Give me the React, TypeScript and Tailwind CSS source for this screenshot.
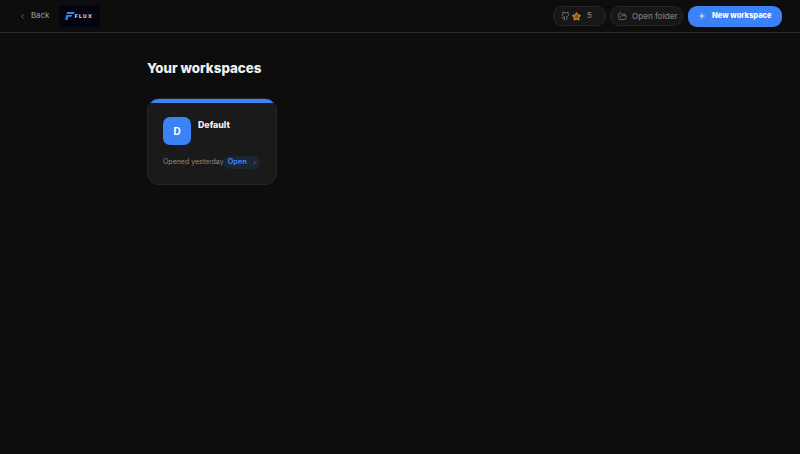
import { ChevronLeft, ChevronRight, Star, FolderOpen, Plus } from "lucide-react";

function GithubMark() {
  return (
    <svg viewBox="0 0 24 24" className="w-[9px] h-[10px] shrink-0 text-[#777777]" fill="none" stroke="currentColor" strokeWidth={2.400} strokeLinecap="round" strokeLinejoin="round">
      <path d="M15 22v-4a4.800 4.800 0 0 0-1-3.500c3 0 6-2 6-5.500.080-1.250-.270-2.480-1-3.500.280-1.150.280-2.350 0-3.500 0 0-1 0-3 1.500-2.640-.500-5.360-.500-8 0C6 2 5 2 5 2c-.300 1.150-.300 2.350 0 3.500A5.400 5.400 0 0 0 4 9c0 3.500 3 5.500 6 5.500-.390.490-.680 1.050-.850 1.650-.170.600-.220 1.230-.150 1.850v4" />
      <path d="M9 18c-4.510 2-5-2-7-2" />
    </svg>
  );
}

export default function App() {
  return (
    <div className="min-h-[454px] bg-[#0d0d0d] text-white font-['Inter',sans-serif] overflow-hidden">
      <header className="h-[33px] border-b border-[#2a2a2a] flex items-center justify-between pl-[19px] pr-[18px]">
        <div className="flex items-center">
          <div className="flex items-center gap-[5px] text-[#8f8f8f] text-[7.800px] font-medium">
            <ChevronLeft className="w-[7px] h-[7px]" strokeWidth={2.500} />
            <span>Back</span>
          </div>
          <div className="ml-[10px] w-[41px] h-[21px] bg-[#02040f] rounded-[2px] flex items-center pl-[6px]">
            <svg viewBox="0 0 12 10" className="w-[10px] h-[8px] shrink-0">
              <path d="M2.500 0H12L10.800 2.600H1.400Z M1.200 3.600H8.800L7.800 6H3.900L2.800 10H0Z" fill="#1f8fff" />
            </svg>
            <span className="-ml-[1px] text-[5px] leading-none font-bold tracking-[1px] text-[#cfd6e0] font-['DejaVu_Sans',sans-serif]">FLUX</span>
          </div>
        </div>
        <div className="flex items-center">
          <div className="h-[20px] w-[53px] rounded-[9px] border border-[#262626] bg-[#171717] flex items-center pl-[7px] text-[#8a8a8a]">
            <GithubMark />
            <Star className="w-[9px] h-[9px] ml-[2px] text-[#d8941f] fill-[#7a5412]" strokeWidth={2.800} />
            <span className="ml-[6px] text-[7.500px] font-medium">5</span>
          </div>
          <div className="ml-[4px] h-[20px] w-[73px] rounded-[9px] border border-[#262626] bg-[#171717] flex items-center pl-[7px] gap-[5px] text-[#7d7d7d]">
            <FolderOpen className="w-[9px] h-[9px]" />
            <span className="text-[8.100px] font-medium">Open folder</span>
          </div>
          <div className="ml-[5px] h-[21px] w-[94px] rounded-[9px] bg-[#3b82f6] flex items-center pl-[10px] gap-[6px]">
            <Plus className="w-[8px] h-[8px] text-[#eaf1ff]" strokeWidth={2.500} />
            <span className="text-[7.500px] font-extrabold text-white">New workspace</span>
          </div>
        </div>
      </header>
      <main className="pl-[147px] pt-[25px]">
        <h1 className="text-[13.300px] leading-[20px] font-extrabold text-[#f0f0f0]">Your workspaces</h1>
        <div className="mt-[20px] w-[130px] h-[87px] rounded-[12px] bg-[#1a1a1a] border border-[#262626] overflow-hidden">
          <div className="h-[4px] bg-[#3b82f6]" />
          <div className="pt-[14px] px-[15px]">
            <div className="flex items-start">
              <div className="w-[28px] h-[28px] rounded-[7px] bg-[#3b82f6] flex items-center justify-center text-[10px] font-bold text-white">D</div>
              <span className="ml-[7px] mt-[1px] text-[8.800px] leading-[13px] font-extrabold text-[#f0f0f0]">Default</span>
            </div>
            <div className="mt-[11px] flex items-center">
              <span className="text-[7px] text-[#8a8a8a] whitespace-nowrap">Opened yesterday</span>
              <div className="h-[13px] w-[37px] shrink-0 -ml-[1px] rounded-full bg-[#1c2534] flex items-center pl-[5px] gap-[5px]">
                <span className="text-[7.300px] font-bold text-[#3b82f6]">Open</span>
                <ChevronRight className="w-[5px] h-[5px] text-[#6f8cb8]" strokeWidth={3} />
              </div>
            </div>
          </div>
        </div>
      </main>
    </div>
  );
}
